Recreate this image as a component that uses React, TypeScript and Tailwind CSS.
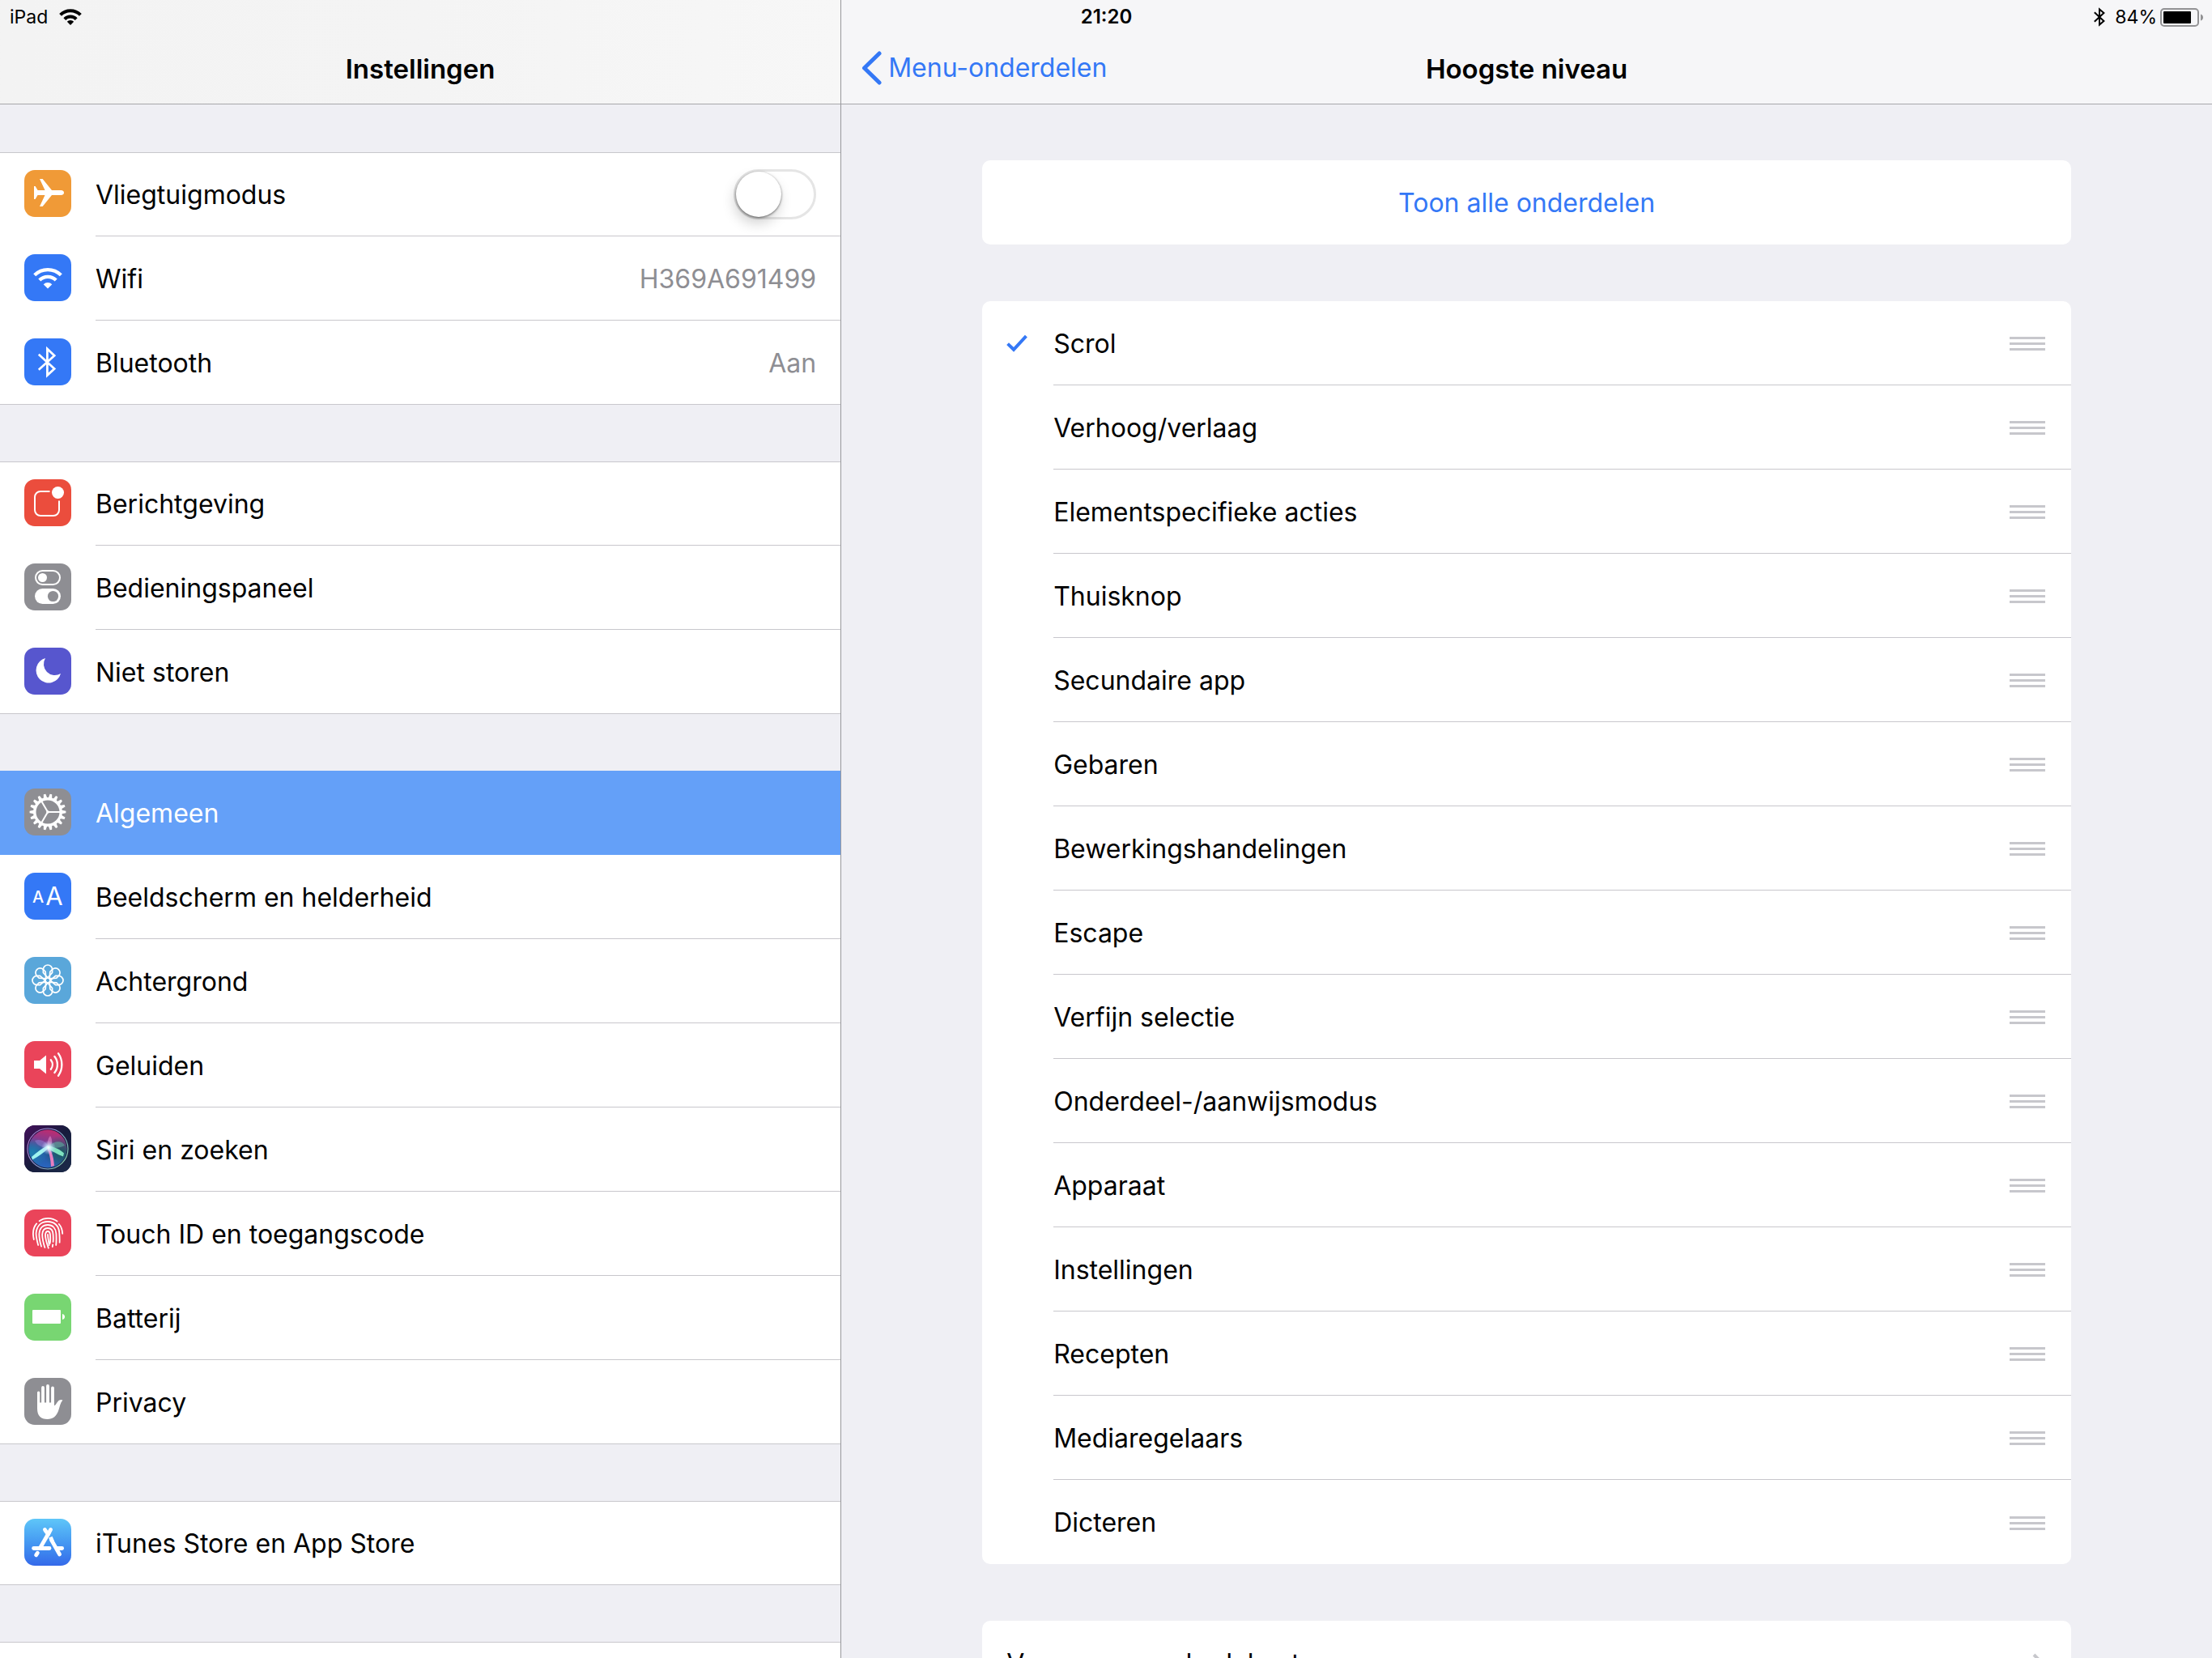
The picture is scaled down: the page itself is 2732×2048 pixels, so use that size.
import { useState } from "react";
import type { ReactNode } from "react";

type SettingItem = {
  id: string;
  label: string;
  icon: ReactNode;
  value?: string;
};

const spokes = [0, 120, 240];
const gearTeeth = Array.from({ length: 18 }, (_, i) => i * 20);
const petals = Array.from({ length: 8 }, (_, i) => i * 45);

const Tile = ({ bg, children }: { bg: string; children: ReactNode }) => (
  <svg
    viewBox="0 0 58 58"
    aria-hidden="true"
    className={`mb-0.5 size-[58px] shrink-0 rounded-[13px] ${bg}`}
  >
    {children}
  </svg>
);

const PlaneIcon = () => (
  <Tile bg="bg-[#f09a37]">
    <path
      fill="#fff"
      d="M12 20h1.6l3 5H25.5L19 11h3.6L34 25h12q3 .6 3 3t-3 3H34L22.6 45H19l6.5-14h-9l-2.9 5H12Z"
    />
  </Tile>
);

const WifiIcon = () => (
  <Tile bg="bg-[#3478f6]">
    <g fill="none" stroke="#fff" strokeWidth="4.3">
      <path d="M12.7 25.7A23.3 23.3 0 0 1 45.3 25.7" />
      <path d="M18.8 32.1A14.3 14.3 0 0 1 39.2 32.1" />
    </g>
    <path fill="#fff" d="M29 42.6 23.7 37.3A7.5 7.5 0 0 1 34.3 37.3Z" />
  </Tile>
);

const BluetoothIcon = () => (
  <Tile bg="bg-[#3478f6]">
    <path
      fill="none"
      stroke="#fff"
      strokeWidth="2.7"
      d="M17.8 19.8 37.2 37.5 28.4 45.6V12.9L37.2 21.3 17.8 38.8"
    />
  </Tile>
);

const NotificationsIcon = () => (
  <Tile bg="bg-[#eb4d3d]">
    <path
      fill="none"
      stroke="#fff"
      strokeWidth="2"
      d="M31.5 15H20a7 7 0 0 0-7 7v16a7 7 0 0 0 7 7h16a7 7 0 0 0 7-7V26.5"
    />
    <circle cx="41.5" cy="16.5" r="7.5" fill="#fff" />
  </Tile>
);

const ControlCenterIcon = () => (
  <Tile bg="bg-[#8e8e93]">
    <rect
      x="14"
      y="9"
      width="30"
      height="17"
      rx="8.5"
      fill="none"
      stroke="#fff"
      strokeWidth="2"
    />
    <circle cx="22.5" cy="17.5" r="5.5" fill="#fff" />
    <rect x="13" y="31" width="32" height="19" rx="9.5" fill="#fff" />
    <circle cx="35.5" cy="40.5" r="6.6" fill="#8e8e93" />
  </Tile>
);

const MoonIcon = () => (
  <Tile bg="bg-[#5756ce]">
    <path
      fill="#fff"
      d="M26 13A15.5 15.5 0 1 0 45 32 13.8 13.8 0 0 1 26 13Z"
    />
  </Tile>
);

const GearIcon = () => (
  <Tile bg="bg-[#8e8e93]">
    <circle
      cx="29"
      cy="29"
      r="16.2"
      fill="none"
      stroke="#fff"
      strokeWidth="3.4"
    />
    {gearTeeth.map((angle) => (
      <path
        key={angle}
        fill="#fff"
        d="M45.5 26.6 51.4 27.7V30.3L45.5 31.4Z"
        transform={`rotate(${angle} 29 29)`}
      />
    ))}
    {spokes.map((angle) => (
      <path
        key={angle}
        stroke="#fff"
        strokeWidth="2"
        d="M29 29H45"
        transform={`rotate(${angle} 29 29)`}
      />
    ))}
    <circle cx="29" cy="29" r="1.8" fill="#fff" />
  </Tile>
);

const DisplayIcon = () => (
  <Tile bg="bg-[#3478f6]">
    <g fill="#fff" textAnchor="middle">
      <text x="17" y="37" fontSize="20" fontWeight="500">
        A
      </text>
      <text x="37" y="40" fontSize="31">
        A
      </text>
    </g>
  </Tile>
);

const WallpaperIcon = () => (
  <Tile bg="bg-[#5aa7da]">
    <g fill="none" stroke="#fff" strokeWidth="1.7">
      {petals.map((angle) => (
        <path
          key={angle}
          d="M29 25.8 23.4 19.4V15.6A5.6 5.6 0 0 1 34.6 15.6V19.4Z"
          transform={`rotate(${angle} 29 29)`}
        />
      ))}
      <circle cx="29" cy="29" r="3" />
    </g>
  </Tile>
);

const SoundIcon = () => (
  <Tile bg="bg-[#ea445a]">
    <path fill="#fff" d="M12 24h7l8-6.5v23L19 34h-7Z" />
    <g fill="none" stroke="#fff" strokeWidth="2.3" strokeLinecap="round">
      <path d="M32.8 23.2A9.5 9.5 0 0 1 32.8 34.8" />
      <path d="M37.4 19A16 16 0 0 1 37.4 39" />
      <path d="M42 15.2A24 24 0 0 1 42 42.8" />
    </g>
  </Tile>
);

const SiriIcon = () => (
  <Tile bg="bg-[#1b1f3d]">
    <defs>
      <linearGradient id="siri-bg" x1="0" y1="0" x2="1" y2="1">
        <stop offset="0" stopColor="#45105c" />
        <stop offset="0.5" stopColor="#171c3c" />
        <stop offset="1" stopColor="#1c2b4a" />
      </linearGradient>
      <linearGradient id="siri-orb" x1="0.6" y1="0" x2="0.4" y2="1">
        <stop offset="0" stopColor="#c22b6e" />
        <stop offset="0.35" stopColor="#7c3c93" />
        <stop offset="0.6" stopColor="#2457a0" />
        <stop offset="1" stopColor="#2a66c0" />
      </linearGradient>
      <radialGradient id="siri-teal" cx="0.85" cy="0.6" r="0.45">
        <stop offset="0" stopColor="#1d5a5c" />
        <stop offset="1" stopColor="#1d5a5c" stopOpacity="0" />
      </radialGradient>
      <radialGradient id="siri-cyan" cx="0.1" cy="0.6" r="0.4">
        <stop offset="0" stopColor="#1f7fae" />
        <stop offset="1" stopColor="#1f7fae" stopOpacity="0" />
      </radialGradient>
      <radialGradient id="siri-glow">
        <stop offset="0" stopColor="#fff" />
        <stop offset="0.3" stopColor="#d9f3ff" stopOpacity="0.8" />
        <stop offset="1" stopColor="#b9c9ff" stopOpacity="0" />
      </radialGradient>
      <linearGradient id="siri-ring" x1="0" y1="0.2" x2="1" y2="0.8">
        <stop offset="0" stopColor="#a678c8" />
        <stop offset="0.5" stopColor="#8f9fd8" />
        <stop offset="1" stopColor="#7fd0a8" />
      </linearGradient>
    </defs>
    <rect width="58" height="58" fill="url(#siri-bg)" />
    <circle cx="29" cy="29" r="23.5" fill="url(#siri-orb)" />
    <circle cx="29" cy="29" r="23.5" fill="url(#siri-teal)" />
    <circle cx="29" cy="29" r="23.5" fill="url(#siri-cyan)" />
    <path
      fill="#8f7fd0"
      fillOpacity="0.55"
      d="M13 19C21 16 28 21 30 27 22 28 16 25 13 19Z"
    />
    <path
      fill="#e08bc8"
      fillOpacity="0.6"
      d="M32 13C36 19 34 25 30 28 27 23 29 17 32 13Z"
    />
    <path
      fill="#5fae9f"
      fillOpacity="0.6"
      d="M30 26C38 18 47 19 50 25 44 28 36 29 30 27Z"
    />
    <path fill="#e77fc0" d="M30 27C34.6 32 36.6 42 37 50L33 51C32.6 42 31 34 28 28Z" />
    <path fill="#9ff3ef" d="M31 27C24 34 17 39 10 42.5L9 39C16 33 22 28.6 29 25Z" />
    <path
      fill="#7fe3c0"
      d="M30 25C37 27 45 30 49 34.5L48 38.6C41 36 35 32 30 30Z"
    />
    <circle cx="30" cy="27.5" r="9" fill="url(#siri-glow)" />
    <circle
      cx="29"
      cy="29"
      r="25"
      fill="none"
      stroke="url(#siri-ring)"
      strokeWidth="1.2"
    />
  </Tile>
);

const TouchIdIcon = () => (
  <Tile bg="bg-[#ea445a]">
    <g fill="none" stroke="#fff" strokeWidth="1.8" strokeLinecap="round">
      <path d="M18.6 14.2C25 9.8 34 9.8 40.6 14.6" />
      <path d="M15.2 17.4C10.8 22.5 10 29 11.8 37" />
      <path d="M42.8 18C46 21.5 47 25.5 47.2 29.8" />
      <path d="M17.2 44C15.5 38 14.4 34 14.6 29 15.4 20 21 15 29 15 37 15 42.6 20 43.2 28 43.6 33 43.8 36 43.6 40.6" />
      <path d="M21 45.6C19 39 18.2 35 18.4 30 18.8 23 23 19 29 19 35.2 19 39 23.4 39.4 30 39.6 35 39.8 39 39.2 44" />
      <path d="M25.4 47C23.4 41 22.2 36 22.2 31 22.4 26 25 23 29 23 33 23 35.4 26 35.6 31 35.8 35 36 37 35.6 40" />
      <path d="M35.2 43.4 34.8 46" />
      <path d="M29.8 47.6C28 42 26 37 26 31.4 26.2 28.6 27 27 29 27 31 27 31.8 28.6 32 31.4 32.2 35 32.6 39 31.6 42" />
      <path d="M29 31C29.2 36 30.4 40 30.6 44" />
    </g>
  </Tile>
);

const BatteryIcon = () => (
  <Tile bg="bg-[#78d672]">
    <rect x="10" y="20" width="35" height="17" rx="1" fill="#fff" />
    <path fill="#fff" d="M47 25q3 .6 3 3.5T47 32Z" />
  </Tile>
);

const HandIcon = () => (
  <Tile bg="bg-[#8e8e93]">
    <g stroke="#fff" strokeLinecap="round">
      <path strokeWidth="3.2" d="M17.6 18V36" />
      <path strokeWidth="3.8" d="M23 12V36" />
      <path strokeWidth="3.8" d="M29 10V36" />
      <path strokeWidth="3.8" d="M35 12.4V36" />
    </g>
    <path
      fill="#fff"
      d="M16 30.5H36.9V34.5Q38.8 33.6 40.4 30.4 43.6 25.8 47.4 27.6C44.4 31 43.8 36 42 41 39.4 47.6 35.4 51 28.6 51 20.4 51 16 46.6 16 38Z"
    />
  </Tile>
);

const AppStoreIcon = () => (
  <Tile bg="bg-linear-to-b from-[#5fc6f8] to-[#3569e9]">
    <g fill="none" stroke="#fff" strokeWidth="4.8" strokeLinecap="round">
      <path d="M32.6 13.4 29 20" />
      <path d="M25.4 13.4 27.4 16.6" />
      <path strokeLinecap="butt" d="M30.4 17.2 19.6 36" />
      <path d="M11.6 36.5H31" />
      <path d="M41 36.5H46.6" />
      <path strokeLinecap="butt" d="M32.4 22.6 34.6 28" />
      <path d="M33.6 26.4 43.6 44" />
      <path d="M16.4 42.2 14.6 44.8" />
    </g>
  </Tile>
);

const settingGroups: SettingItem[][] = [
  [
    { id: "airplane", label: "Vliegtuigmodus", icon: <PlaneIcon /> },
    { id: "wifi", label: "Wifi", icon: <WifiIcon />, value: "H369A691499" },
    {
      id: "bluetooth",
      label: "Bluetooth",
      icon: <BluetoothIcon />,
      value: "Aan",
    },
  ],
  [
    { id: "notifications", label: "Berichtgeving", icon: <NotificationsIcon /> },
    { id: "control", label: "Bedieningspaneel", icon: <ControlCenterIcon /> },
    { id: "dnd", label: "Niet storen", icon: <MoonIcon /> },
  ],
  [
    { id: "general", label: "Algemeen", icon: <GearIcon /> },
    {
      id: "display",
      label: "Beeldscherm en helderheid",
      icon: <DisplayIcon />,
    },
    { id: "wallpaper", label: "Achtergrond", icon: <WallpaperIcon /> },
    { id: "sounds", label: "Geluiden", icon: <SoundIcon /> },
    { id: "siri", label: "Siri en zoeken", icon: <SiriIcon /> },
    { id: "touchid", label: "Touch ID en toegangscode", icon: <TouchIdIcon /> },
    { id: "battery", label: "Batterij", icon: <BatteryIcon /> },
    { id: "privacy", label: "Privacy", icon: <HandIcon /> },
  ],
  [
    {
      id: "store",
      label: "iTunes Store en App Store",
      icon: <AppStoreIcon />,
    },
  ],
];

const menuItems = [
  "Scrol",
  "Verhoog/verlaag",
  "Elementspecifieke acties",
  "Thuisknop",
  "Secundaire app",
  "Gebaren",
  "Bewerkingshandelingen",
  "Escape",
  "Verfijn selectie",
  "Onderdeel-/aanwijsmodus",
  "Apparaat",
  "Instellingen",
  "Recepten",
  "Mediaregelaars",
  "Dicteren",
];

function StatusBar() {
  return (
    <div className="absolute inset-x-0 top-0 grid h-[42px] grid-cols-3 items-center pr-[11px] pl-3 text-[23px] leading-7">
      <div className="flex items-center gap-3.5">
        <span>iPad</span>
        <svg viewBox="0 0 28 20" aria-hidden="true" className="h-5 w-7">
          <g fill="none" stroke="#000" strokeWidth="4">
            <path d="M1.6 7.4A17.6 17.6 0 0 1 26.4 7.4" />
            <path d="M6.8 12.6A10.2 10.2 0 0 1 21.2 12.6" />
          </g>
          <path d="M14 20 9.8 15.8A5.8 5.8 0 0 1 18.2 15.8Z" />
        </svg>
      </div>
      <time className="text-center text-2xl leading-7 font-semibold">
        21:20
      </time>
      <div className="flex items-center justify-end">
        <svg viewBox="0 0 14 24" aria-hidden="true" className="mr-3 h-6 w-3.5">
          <path
            fill="none"
            stroke="#000"
            strokeWidth="2"
            d="M.8 6.2 12.4 17 7 21.6V2.4L12.4 7 .8 17.8"
          />
        </svg>
        <span className="mr-1">84%</span>
        <svg
          viewBox="0 0 53 23"
          aria-hidden="true"
          className="h-[23px] w-[53px]"
        >
          <rect
            x="1"
            y="1"
            width="46"
            height="21"
            rx="4"
            fill="none"
            stroke="#929294"
            strokeWidth="2"
          />
          <rect x="4" y="4" width="34" height="15" rx="1" />
          <path fill="#929294" d="M50 7.5q3 1 3 4t-3 4Z" />
        </svg>
      </div>
    </div>
  );
}

type RowProps = {
  item: SettingItem;
  selected: boolean;
  last: boolean;
  onSelect: () => void;
};

function SettingRow({ item, selected, last, onSelect }: RowProps) {
  if (item.id === "airplane") {
    return (
      <label className="flex h-[104px] items-center gap-[30px] pl-[30px]">
        {item.icon}
        <span className="flex h-full flex-1 items-center justify-between border-b border-[#c8c7cc] pr-[30px]">
          <span className="pt-0.5">{item.label}</span>
          <input type="checkbox" role="switch" className="peer sr-only" />
          <span className="flex h-[62px] w-[102px] items-center rounded-full border-3 border-[#e5e5e5] peer-checked:justify-end peer-checked:bg-[#4cd964]">
            <span className="size-14 rounded-full bg-white shadow-[0_1px_3px_rgba(0,0,0,0.55),-2px_8px_16px_rgba(0,0,0,0.18)]" />
          </span>
        </span>
      </label>
    );
  }

  return (
    <button
      type="button"
      onClick={onSelect}
      className={`flex h-[104px] w-full items-center gap-[30px] pl-[30px] text-left ${
        selected ? "bg-[#64a0f8] text-white" : ""
      }`}
    >
      {item.icon}
      <span
        className={`flex h-full flex-1 items-center justify-between pt-0.5 pr-[30px] ${
          last || selected ? "" : "border-b border-[#c8c7cc]"
        }`}
      >
        {item.label}
        {item.value && <span className="text-[#8e8e93]">{item.value}</span>}
      </span>
    </button>
  );
}

function Sidebar() {
  const [selected, setSelected] = useState("general");

  return (
    <aside className="w-[38%] shrink-0">
      <header className="flex h-[129px] items-end justify-center border-b border-[#a7a7aa] bg-linear-to-r from-[#f3f3f3] via-[#f4f4f4] to-[#f7f7f7] pb-[23px]">
        <h1 className="text-[33px] leading-10 font-semibold">Instellingen</h1>
      </header>
      <nav className="flex flex-col gap-[70px] pt-[59px]">
        {settingGroups.map((group) => (
          <div
            key={group[0].id}
            className="bg-white shadow-[inset_0_1px_0_#c8c7cc,inset_0_-1px_0_#c8c7cc]"
          >
            {group.map((item, i) => (
              <SettingRow
                key={item.id}
                item={item}
                selected={item.id === selected}
                last={i === group.length - 1}
                onSelect={() => setSelected(item.id)}
              />
            ))}
          </div>
        ))}
        <div className="h-[104px] bg-white shadow-[inset_0_1px_0_#c8c7cc,inset_0_-1px_0_#c8c7cc]" />
      </nav>
    </aside>
  );
}

function MenuRow({ label, checked }: { label: string; checked: boolean }) {
  return (
    <li className="group flex h-[104px] items-center">
      <label className="flex h-full flex-1 items-center">
        <input
          type="checkbox"
          defaultChecked={checked}
          className="peer sr-only"
        />
        <svg
          viewBox="0 0 26 22"
          aria-hidden="true"
          className="invisible mr-8 ml-[30px] h-[22px] w-[26px] peer-checked:visible"
        >
          <path
            fill="none"
            stroke="#3478f6"
            strokeWidth="4"
            d="M1.6 11.6 9 18.8 24.4 2.2"
          />
        </svg>
        <span className="flex h-full flex-1 items-center border-b border-[#c8c7cc] pt-0.5 group-last:border-0">
          {label}
        </span>
      </label>
      <button
        type="button"
        aria-label={`Verplaats ${label}`}
        className="flex h-full flex-col justify-center gap-1 border-b border-[#c8c7cc] pt-0.5 pr-8 group-last:border-0"
      >
        <span className="h-[3px] w-11 bg-[#c7c7cc]" />
        <span className="h-[3px] w-11 bg-[#c7c7cc]" />
        <span className="h-[3px] w-11 bg-[#c7c7cc]" />
      </button>
    </li>
  );
}

function Detail() {
  return (
    <main className="min-w-0 flex-1 border-l border-[#98989c]">
      <header className="grid h-[129px] grid-cols-[1fr_auto_1fr] items-end border-b border-[#a7a7aa] bg-[#f6f6f8] px-[25px] pb-[23px]">
        <a href="#menu" className="flex items-center gap-2 text-[#3478f6]">
          <svg viewBox="0 0 25 42" aria-hidden="true" className="h-[42px] w-[25px]">
            <path
              fill="none"
              stroke="currentColor"
              strokeWidth="5"
              strokeLinecap="round"
              strokeLinejoin="round"
              d="M22 3 3.5 21 22 39"
            />
          </svg>
          <span className="leading-10">Menu-onderdelen</span>
        </a>
        <h2 className="text-[33px] leading-10 font-semibold">Hoogste niveau</h2>
      </header>
      <div className="flex flex-col gap-[70px] px-[174px] pt-[69px]">
        <button
          type="button"
          className="h-[104px] rounded-[10px] bg-white pt-0.5 text-[#3478f6]"
        >
          Toon alle onderdelen
        </button>
        <ul className="rounded-[10px] bg-white">
          {menuItems.map((label) => (
            <MenuRow key={label} label={label} checked={label === "Scrol"} />
          ))}
        </ul>
        <button
          type="button"
          className="flex h-[104px] items-center justify-between rounded-[10px] bg-white pt-0.5 pr-8 pl-[30px]"
        >
          Voeg menuonderdelen toe
          <svg viewBox="0 0 16 26" aria-hidden="true" className="h-[26px] w-4">
            <path
              fill="none"
              stroke="#c7c7cc"
              strokeWidth="4"
              d="M2 2 13 13 2 24"
            />
          </svg>
        </button>
      </div>
    </main>
  );
}

export default function App() {
  return (
    <div className="relative flex h-screen overflow-hidden bg-[#efeff4] font-['Inter',sans-serif] text-[32px] text-black">
      <Sidebar />
      <Detail />
      <StatusBar />
    </div>
  );
}
